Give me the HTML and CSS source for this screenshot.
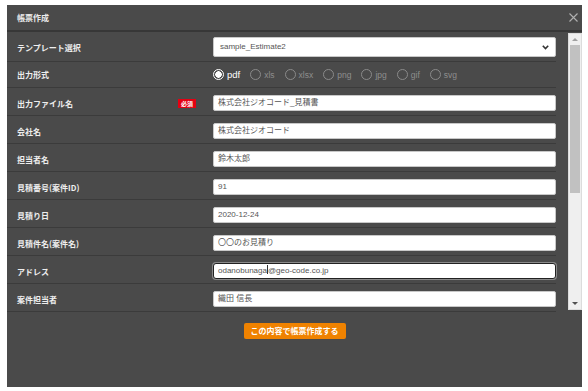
FILE: index.html
```html
<!DOCTYPE html>
<html lang="ja">
<head>
<meta charset="utf-8">
<title>帳票作成</title>
<link rel="stylesheet" href="styles.css">
</head>
<body>
<div class="modal">
  <div class="modal-header">
    <span class="title">帳票作成</span>
    <svg class="close" width="9" height="9" viewBox="0 0 9 9"><path d="M0.5 0.5L8.5 8.5M8.5 0.5L0.5 8.5" stroke="#b0b0b0" stroke-width="1.1" fill="none"/></svg>
  </div>
  <div class="modal-body">
    <div class="rows">
      <div class="row row-select">
        <div class="label"><span>テンプレート選択</span></div>
        <div class="field">
          <div class="select"><span>sample_Estimate2</span>
            <svg width="7" height="5" viewBox="0 0 7 5"><path d="M0.8 0.8L3.5 3.6L6.2 0.8" stroke="#333" stroke-width="1.6" fill="none"/></svg>
          </div>
        </div>
      </div>
      <div class="row row-radio">
        <div class="label"><span>出力形式</span></div>
        <div class="field radios">
          <span class="opt on"><span class="dot"></span>pdf</span>
          <span class="opt"><span class="dot"></span>xls</span>
          <span class="opt"><span class="dot"></span>xlsx</span>
          <span class="opt"><span class="dot"></span>png</span>
          <span class="opt"><span class="dot"></span>jpg</span>
          <span class="opt"><span class="dot"></span>gif</span>
          <span class="opt"><span class="dot"></span>svg</span>
        </div>
      </div>
      <div class="row">
        <div class="label"><span>出力ファイル名</span><span class="badge">必須</span></div>
        <div class="field"><div class="input">株式会社ジオコード_見積書</div></div>
      </div>
      <div class="row">
        <div class="label"><span>会社名</span></div>
        <div class="field"><div class="input">株式会社ジオコード</div></div>
      </div>
      <div class="row">
        <div class="label"><span>担当者名</span></div>
        <div class="field"><div class="input">鈴木太郎</div></div>
      </div>
      <div class="row">
        <div class="label"><span>見積番号(案件ID)</span></div>
        <div class="field"><div class="input">91</div></div>
      </div>
      <div class="row">
        <div class="label"><span>見積り日</span></div>
        <div class="field"><div class="input">2020-12-24</div></div>
      </div>
      <div class="row">
        <div class="label"><span>見積件名(案件名)</span></div>
        <div class="field"><div class="input">〇〇のお見積り</div></div>
      </div>
      <div class="row">
        <div class="label"><span>アドレス</span></div>
        <div class="field"><div class="input focus">odanobunaga<span class="caret"></span>@geo-code.co.jp</div></div>
      </div>
      <div class="row">
        <div class="label"><span>案件担当者</span></div>
        <div class="field"><div class="input">織田 信長</div></div>
      </div>
    </div>
    <div class="scrollbar">
      <div class="sb-btn"><span class="tri-up"></span></div>
      <div class="sb-track"><div class="sb-thumb"></div></div>
      <div class="sb-btn"><span class="tri-down"></span></div>
    </div>
  </div>
  <div class="modal-footer">
    <button class="submit" type="button">この内容で帳票作成する</button>
  </div>
</div>
</body>
</html>
```

FILE: styles.css
```css
* { box-sizing: border-box; margin: 0; padding: 0; }
html, body { background: #ffffff; }
body {
  padding: 5px 6px 4px 7px;
  font-family: "Noto Sans CJK JP", "Liberation Sans", sans-serif;
}
.modal {
  width: 575px;
  height: 382px;
  background: #4a4a4a;
  display: flex;
  flex-direction: column;
}
.modal-header {
  height: 27px;
  flex: none;
  border-bottom: 2px solid #373737;
  display: flex;
  align-items: center;
  justify-content: space-between;
  padding: 0 4px 0 10px;
}
.title {
  font-size: 8px;
  font-weight: bold;
  color: #ececec;
}
.close { display: block; }
.modal-body {
  height: 280px;
  flex: none;
  display: flex;
}
.rows {
  flex: 1;
  padding-right: 12px;
  overflow: hidden;
}
.row {
  display: flex;
  align-items: flex-start;
  height: 28px;
  padding: 7px 0 0 10px;
  border-bottom: 1px solid #3b3b3b;
}
.row-select { height: 30px; padding-top: 5px; }
.row-radio { height: 26px; padding-top: 7px; }
.label {
  width: 179px;
  flex: none;
  height: 16px;
  display: flex;
  align-items: center;
  justify-content: space-between;
  font-size: 8px;
  font-weight: bold;
  color: #eeeeee;
}
.row-select .label { height: 20px; }
.row-radio .label { height: 11px; }
.badge {
  background: #e50012;
  color: #fff;
  font-size: 6px;
  line-height: 9px;
  height: 9px;
  padding: 0 3px;
  font-weight: bold;
}
.field {
  flex: 1;
  margin-left: 17px;
}
.input, .select {
  height: 16px;
  background: #ffffff;
  border: 1px solid #c8c8c8;
  border-radius: 2px;
  font-family: "Liberation Sans", "Noto Sans CJK JP", sans-serif;
  font-size: 8px;
  color: #555555;
  line-height: 14px;
  padding: 0 4px;
  white-space: nowrap;
}
.select {
  height: 20px;
  line-height: 18px;
  padding: 0 6px;
  display: flex;
  align-items: center;
  justify-content: space-between;
}
.input.focus {
  border: 1px solid #222;
  border-radius: 3px;
  box-shadow: 0 0 0 1px #8a8a8a;
}
.caret {
  display: inline-block;
  width: 1px;
  height: 9px;
  background: #333;
  vertical-align: -1px;
}
.radios {
  display: flex;
  align-items: center;
  height: 11px;
  gap: 10px;
  font-family: "Liberation Sans", sans-serif;
}
.opt {
  display: flex;
  align-items: center;
  gap: 3px;
  font-size: 8.5px;
  color: #8e8e8e;
}
.opt .dot {
  width: 11px;
  height: 11px;
  border-radius: 50%;
  border: 1px solid #8a8a8a;
  flex: none;
}
.opt.on {
  color: #ffffff;
  font-size: 9.5px;
}
.opt.on .dot {
  border: 1.5px solid #ffffff;
  background: radial-gradient(circle, #ffffff 0 3px, transparent 3.5px);
}
.scrollbar {
  width: 14px;
  flex: none;
  margin: 1px 0 2px;
  background: #efefef;
  border: 1px solid #dcdcdc;
  display: flex;
  flex-direction: column;
}
.sb-btn {
  height: 11px;
  flex: none;
  display: flex;
  align-items: center;
  justify-content: center;
}
.tri-up, .tri-down {
  width: 0;
  height: 0;
  border-left: 3px solid transparent;
  border-right: 3px solid transparent;
}
.tri-up { border-bottom: 3px solid #a0a0a0; }
.tri-down { border-top: 3px solid #505050; }
.sb-track {
  flex: 1;
  padding: 0 1px;
}
.sb-thumb {
  height: 148px;
  background: #c1c1c1;
}
.modal-footer {
  display: flex;
  justify-content: center;
  padding-top: 11px;
}
.submit {
  width: 102px;
  height: 16px;
  background: #ef8200;
  color: #ffffff;
  border: none;
  border-radius: 2px;
  font-family: "Noto Sans CJK JP", sans-serif;
  font-size: 8px;
  font-weight: bold;
  line-height: 16px;
}
```
